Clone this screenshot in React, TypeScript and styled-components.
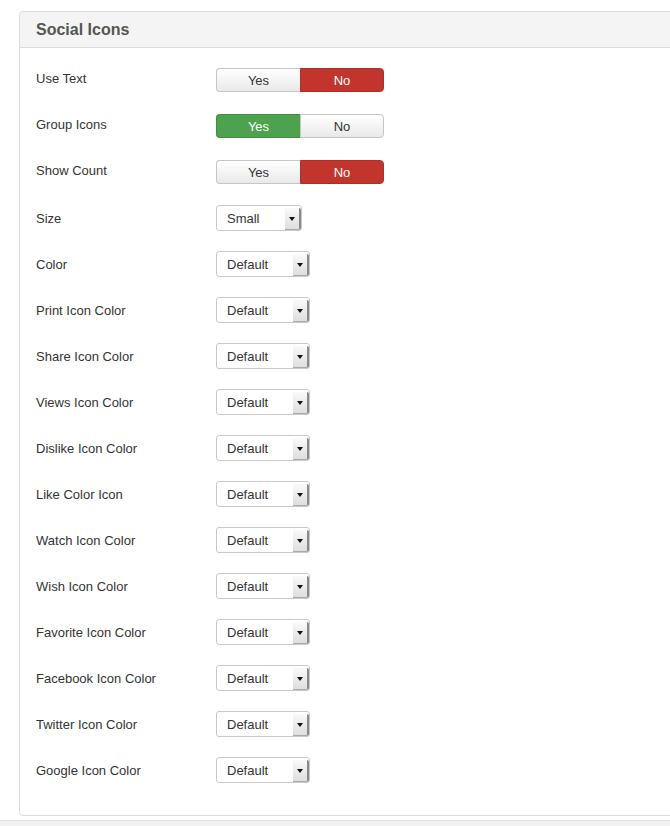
import React from 'react'
import styled, { createGlobalStyle } from 'styled-components'

const GlobalStyle = createGlobalStyle`
  html, body {
    margin: 0;
    padding: 0;
    background: #fff;
    overflow: hidden;
  }
  body {
    font-family: "Liberation Sans", Arial, Helvetica, sans-serif;
    font-size: 13px;
    color: #333;
  }
`

const Page = styled.div`
  width: 670px;
  height: 826px;
  display: flex;
  flex-direction: column;
  padding-top: 11px;
  box-sizing: border-box;
`

const Panel = styled.div`
  margin-left: 19px;
  width: 680px;
  border: 1px solid #dcdcdc;
  border-radius: 4px;
  background: #fff;
`

const PanelHeader = styled.div`
  height: 36px;
  display: flex;
  align-items: center;
  padding: 1px 0 0 16px;
  box-sizing: border-box;
  background: #f4f4f4;
  border-bottom: 1px solid #dcdcdc;
  border-radius: 4px 4px 0 0;
`

const Title = styled.h3`
  margin: 0;
  font-size: 16px;
  font-weight: bold;
  color: #555;
`

const PanelBody = styled.div`
  padding: 9px 0 22px 16px;
`

const Row = styled.div`
  height: 46px;
  display: flex;
  align-items: center;
`

const Label = styled.div<{ $raise?: boolean }>`
  width: 180px;
  font-size: 13px;
  color: #333;
  margin-top: ${(p) => (p.$raise ? '-4px' : '0')};
`

const ToggleGroup = styled.div`
  display: flex;
  height: 24px;
`

const ToggleBtn = styled.div<{ $tone: 'off' | 'yes' | 'no' }>`
  width: 84px;
  box-sizing: border-box;
  display: flex;
  align-items: center;
  justify-content: center;
  font-size: 13px;
  border: 1px solid
    ${(p) => (p.$tone === 'yes' ? '#3f8f3f' : p.$tone === 'no' ? '#ad2f28' : '#c5c5c5')};
  color: ${(p) => (p.$tone === 'off' ? '#333' : '#fff')};
  background: ${(p) =>
    p.$tone === 'yes'
      ? '#4ea24e'
      : p.$tone === 'no'
      ? '#c1352c'
      : 'linear-gradient(#ffffff, #e9e9e9)'};
  &:first-child {
    border-radius: 4px 0 0 4px;
    border-right: none;
  }
  &:last-child {
    border-radius: 0 4px 4px 0;
  }
`

const Select = styled.div`
  display: flex;
  align-items: stretch;
  height: 26px;
  box-sizing: border-box;
  border: 1px solid #c8c8c8;
  border-radius: 3px;
  background: #fff;
`

const SelectText = styled.span`
  display: flex;
  align-items: center;
  padding: 0 25px 0 10px;
  font-size: 13px;
  color: #333;
`

const Arrow = styled.span`
  width: 14px;
  margin: 2px 0 0;
  display: flex;
  align-items: center;
  justify-content: center;
  background: linear-gradient(#fafafa, #dedede);
  border-right: 2px solid #8a8a8a;
  border-bottom: 1px solid #aaa;
  border-radius: 0 2px 2px 0;
  &::after {
    content: '';
    border-left: 3px solid transparent;
    border-right: 3px solid transparent;
    border-top: 4px solid #111;
  }
`

const Footer = styled.div`
  margin-top: 4px;
  flex: 1;
  background: #f2f2f2;
  border-top: 1px solid #e0e0e0;
`

type Toggle = { kind: 'toggle'; label: string; yes: boolean }
type Choice = { kind: 'select'; label: string; value: string }

const fields: (Toggle | Choice)[] = [
  { kind: 'toggle', label: 'Use Text', yes: false },
  { kind: 'toggle', label: 'Group Icons', yes: true },
  { kind: 'toggle', label: 'Show Count', yes: false },
  { kind: 'select', label: 'Size', value: 'Small' },
  { kind: 'select', label: 'Color', value: 'Default' },
  { kind: 'select', label: 'Print Icon Color', value: 'Default' },
  { kind: 'select', label: 'Share Icon Color', value: 'Default' },
  { kind: 'select', label: 'Views Icon Color', value: 'Default' },
  { kind: 'select', label: 'Dislike Icon Color', value: 'Default' },
  { kind: 'select', label: 'Like Color Icon', value: 'Default' },
  { kind: 'select', label: 'Watch Icon Color', value: 'Default' },
  { kind: 'select', label: 'Wish Icon Color', value: 'Default' },
  { kind: 'select', label: 'Favorite Icon Color', value: 'Default' },
  { kind: 'select', label: 'Facebook Icon Color', value: 'Default' },
  { kind: 'select', label: 'Twitter Icon Color', value: 'Default' },
  { kind: 'select', label: 'Google Icon Color', value: 'Default' },
]

const App: React.FC = () => {
  return (
    <Page>
      <GlobalStyle />
      <Panel>
        <PanelHeader>
          <Title>Social Icons</Title>
        </PanelHeader>
        <PanelBody>
          {fields.map((f) => (
            <Row key={f.label}>
              <Label $raise={f.kind === 'toggle'}>{f.label}</Label>
              {f.kind === 'toggle' ? (
                <ToggleGroup>
                  <ToggleBtn $tone={f.yes ? 'yes' : 'off'}>Yes</ToggleBtn>
                  <ToggleBtn $tone={f.yes ? 'off' : 'no'}>No</ToggleBtn>
                </ToggleGroup>
              ) : (
                <Select>
                  <SelectText>{f.value}</SelectText>
                  <Arrow />
                </Select>
              )}
            </Row>
          ))}
        </PanelBody>
      </Panel>
      <Footer />
    </Page>
  )
}

export default App
